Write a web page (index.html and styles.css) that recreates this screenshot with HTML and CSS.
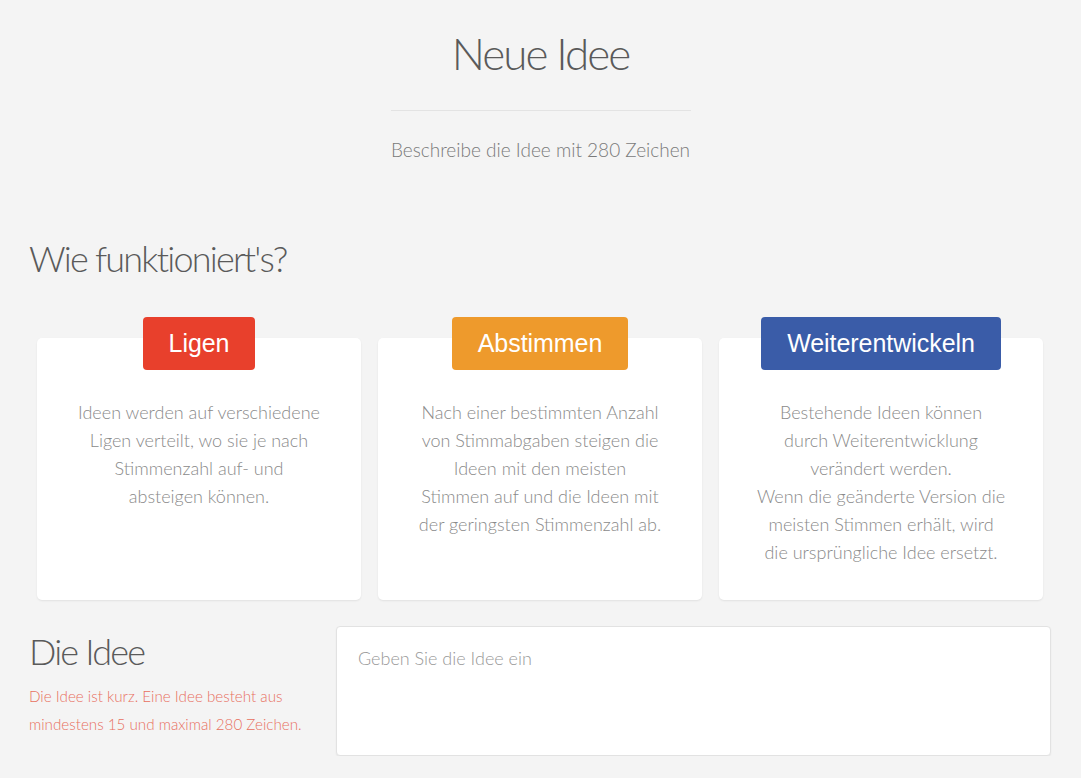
FILE: index.html
```html
<!DOCTYPE html>
<html lang="de">
<head>
<meta charset="utf-8">
<title>Neue Idee</title>
<link rel="stylesheet" href="styles.css">
</head>
<body>
<header class="intro">
  <h1 class="title">Neue Idee</h1>
  <hr class="divider">
  <p class="subtitle">Beschreibe die Idee mit 280 Zeichen</p>
</header>

<section class="how">
  <h2 class="section-title">Wie funktioniert's?</h2>
  <div class="steps">
    <div class="step">
      <span class="badge badge-red">Ligen</span>
      <div class="card">
        <p class="card-text">Ideen werden auf verschiedene<br>Ligen verteilt, wo sie je nach<br>Stimmenzahl auf- und<br>absteigen können.</p>
      </div>
    </div>
    <div class="step">
      <span class="badge badge-orange">Abstimmen</span>
      <div class="card">
        <p class="card-text">Nach einer bestimmten Anzahl<br>von Stimmabgaben steigen die<br>Ideen mit den meisten<br>Stimmen auf und die Ideen mit<br>der geringsten Stimmenzahl ab.</p>
      </div>
    </div>
    <div class="step">
      <span class="badge badge-blue">Weiterentwickeln</span>
      <div class="card">
        <p class="card-text">Bestehende Ideen können<br>durch Weiterentwicklung<br>verändert werden.<br>Wenn die geänderte Version die<br>meisten Stimmen erhält, wird<br>die ursprüngliche Idee ersetzt.</p>
      </div>
    </div>
  </div>
</section>

<section class="idea">
  <div class="idea-info">
    <h2 class="section-title">Die Idee</h2>
    <p class="idea-error">Die Idee ist kurz. Eine Idee besteht aus<br>mindestens 15 und maximal 280 Zeichen.</p>
  </div>
  <textarea class="idea-input" placeholder="Geben Sie die Idee ein"></textarea>
</section>
</body>
</html>
```

FILE: styles.css
```css
* { box-sizing: border-box; }

html, body {
  margin: 0;
  padding: 0;
  background: #f4f4f4;
  overflow: hidden;
}

body {
  font-family: Lato, "Open Sans", sans-serif;
  font-weight: 300;
  color: #555;
}

.intro {
  text-align: center;
  padding-top: 27px;
}

.title {
  margin: 0;
  font-size: 44px;
  line-height: 52px;
  font-weight: 300;
  color: #5a5a5a;
  letter-spacing: -2px;
}

.divider {
  width: 300px;
  margin: 31px auto 0;
  border: 0;
  border-top: 1px solid #e3e3e3;
  height: 0;
}

.subtitle {
  margin: 27px 0 0;
  font-size: 19px;
  line-height: 24px;
  color: #7a7a7a;
}

.how {
  padding: 0 0 0 29px;
}

.section-title {
  margin: 0;
  font-size: 36px;
  line-height: 44px;
  font-weight: 300;
  color: #5a5a5a;
  letter-spacing: -1.8px;
}

.how .section-title {
  margin-top: 74px;
}

.steps {
  display: flex;
  gap: 17px;
  margin: 37px 0 0 8px;
}

.step {
  width: 324px;
  display: flex;
  flex-direction: column;
  align-items: center;
}

.badge {
  position: relative;
  z-index: 1;
  height: 53px;
  padding: 0 26px;
  border-radius: 4px;
  font-family: "Liberation Sans", Arial, sans-serif;
  font-weight: 400;
  font-size: 25px;
  line-height: 53px;
  color: #fff;
  letter-spacing: -0.05px;
}

.badge-red { background: #e8402c; }
.badge-orange { background: #ee9a2c; }
.badge-blue { background: #3a5ca8; }

.card {
  align-self: stretch;
  margin-top: -32px;
  height: 262px;
  background: #fff;
  border-radius: 5px;
  box-shadow: 0 1px 2px rgba(0, 0, 0, 0.08);
  padding-top: 60px;
}

.card-text {
  margin: 0;
  text-align: center;
  font-size: 18px;
  line-height: 28px;
  color: #8a8a8a;
  white-space: nowrap;
}

.idea {
  display: flex;
  margin-top: 26px;
  padding-left: 29px;
}

.idea-info {
  width: 307px;
  padding-top: 3px;
}

.idea-error {
  margin: 9px 0 0;
  font-size: 15.2px;
  line-height: 28px;
  color: #e8705f;
}

.idea-input {
  width: 715px;
  height: 130px;
  margin: 0;
  padding: 19px 21px;
  border: 1px solid #e2e2e2;
  border-radius: 4px;
  background: #fff;
  box-shadow: 0 1px 2px rgba(0, 0, 0, 0.06);
  font-family: Lato, "Open Sans", sans-serif;
  font-weight: 300;
  font-size: 18px;
  line-height: 24px;
  color: #555;
  resize: none;
  outline: none;
}

.idea-input::placeholder {
  color: #999;
}
```
